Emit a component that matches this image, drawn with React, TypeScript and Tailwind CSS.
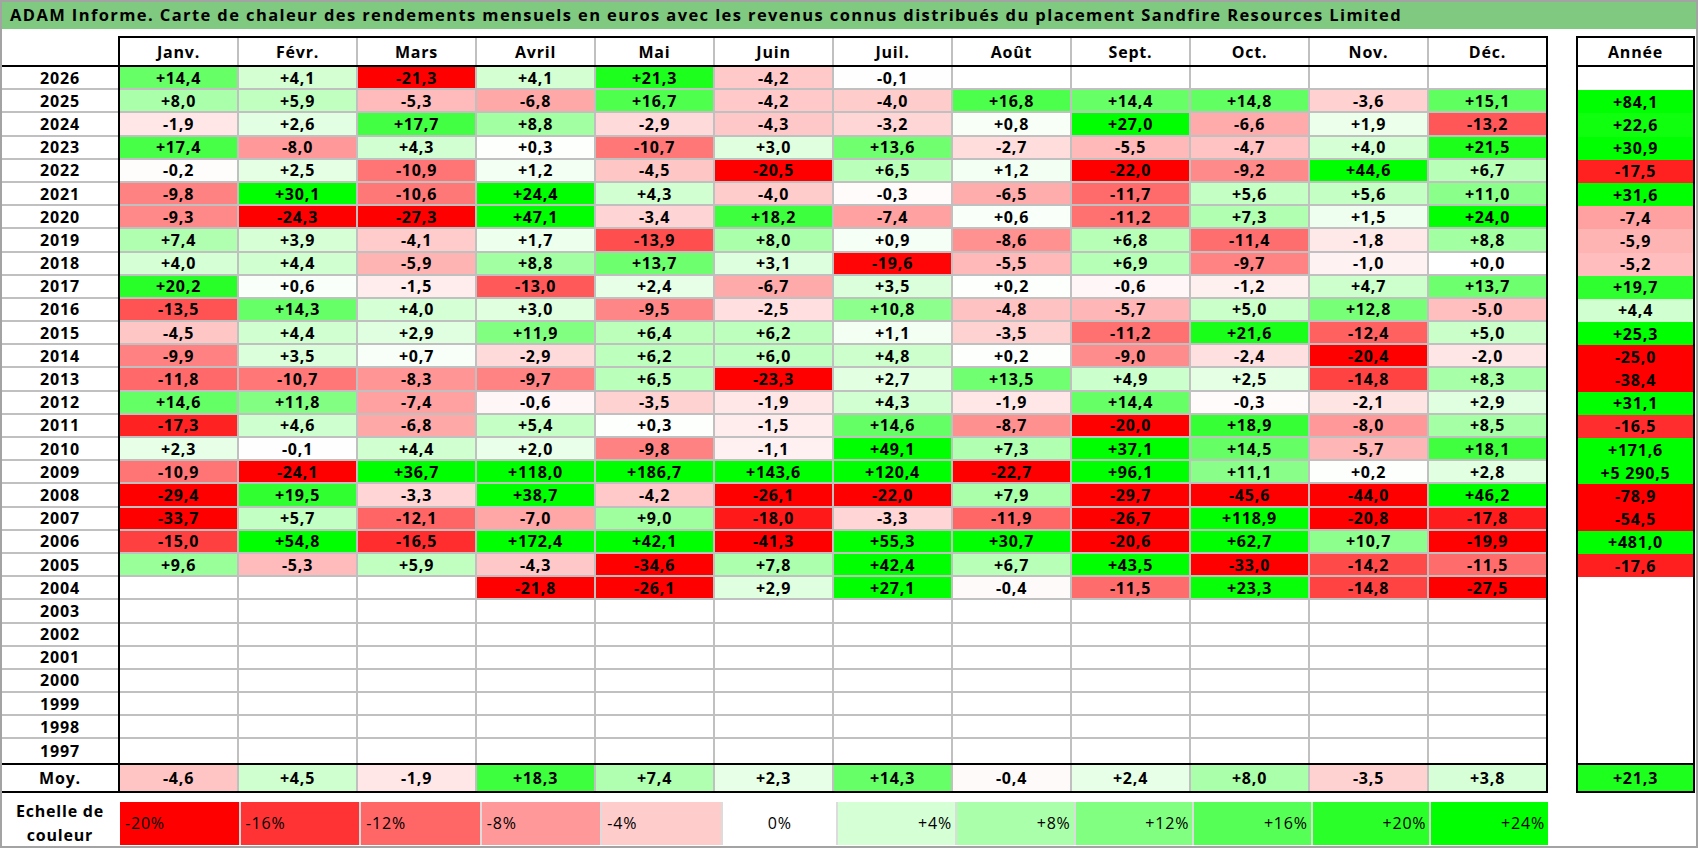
import React from 'react';

const months = ['Janv.', 'Févr.', 'Mars', 'Avril', 'Mai', 'Juin', 'Juil.', 'Août', 'Sept.', 'Oct.', 'Nov.', 'Déc.'];

// year, Jan..Dec, then yearly total ('' = no data)
const rows: [string, string[]][] = [
  ['2026', ['+14,4', '+4,1', '-21,3', '+4,1', '+21,3', '-4,2', '-0,1', '', '', '', '', '', '']],
  ['2025', ['+8,0', '+5,9', '-5,3', '-6,8', '+16,7', '-4,2', '-4,0', '+16,8', '+14,4', '+14,8', '-3,6', '+15,1', '+84,1']],
  ['2024', ['-1,9', '+2,6', '+17,7', '+8,8', '-2,9', '-4,3', '-3,2', '+0,8', '+27,0', '-6,6', '+1,9', '-13,2', '+22,6']],
  ['2023', ['+17,4', '-8,0', '+4,3', '+0,3', '-10,7', '+3,0', '+13,6', '-2,7', '-5,5', '-4,7', '+4,0', '+21,5', '+30,9']],
  ['2022', ['-0,2', '+2,5', '-10,9', '+1,2', '-4,5', '-20,5', '+6,5', '+1,2', '-22,0', '-9,2', '+44,6', '+6,7', '-17,5']],
  ['2021', ['-9,8', '+30,1', '-10,6', '+24,4', '+4,3', '-4,0', '-0,3', '-6,5', '-11,7', '+5,6', '+5,6', '+11,0', '+31,6']],
  ['2020', ['-9,3', '-24,3', '-27,3', '+47,1', '-3,4', '+18,2', '-7,4', '+0,6', '-11,2', '+7,3', '+1,5', '+24,0', '-7,4']],
  ['2019', ['+7,4', '+3,9', '-4,1', '+1,7', '-13,9', '+8,0', '+0,9', '-8,6', '+6,8', '-11,4', '-1,8', '+8,8', '-5,9']],
  ['2018', ['+4,0', '+4,4', '-5,9', '+8,8', '+13,7', '+3,1', '-19,6', '-5,5', '+6,9', '-9,7', '-1,0', '+0,0', '-5,2']],
  ['2017', ['+20,2', '+0,6', '-1,5', '-13,0', '+2,4', '-6,7', '+3,5', '+0,2', '-0,6', '-1,2', '+4,7', '+13,7', '+19,7']],
  ['2016', ['-13,5', '+14,3', '+4,0', '+3,0', '-9,5', '-2,5', '+10,8', '-4,8', '-5,7', '+5,0', '+12,8', '-5,0', '+4,4']],
  ['2015', ['-4,5', '+4,4', '+2,9', '+11,9', '+6,4', '+6,2', '+1,1', '-3,5', '-11,2', '+21,6', '-12,4', '+5,0', '+25,3']],
  ['2014', ['-9,9', '+3,5', '+0,7', '-2,9', '+6,2', '+6,0', '+4,8', '+0,2', '-9,0', '-2,4', '-20,4', '-2,0', '-25,0']],
  ['2013', ['-11,8', '-10,7', '-8,3', '-9,7', '+6,5', '-23,3', '+2,7', '+13,5', '+4,9', '+2,5', '-14,8', '+8,3', '-38,4']],
  ['2012', ['+14,6', '+11,8', '-7,4', '-0,6', '-3,5', '-1,9', '+4,3', '-1,9', '+14,4', '-0,3', '-2,1', '+2,9', '+31,1']],
  ['2011', ['-17,3', '+4,6', '-6,8', '+5,4', '+0,3', '-1,5', '+14,6', '-8,7', '-20,0', '+18,9', '-8,0', '+8,5', '-16,5']],
  ['2010', ['+2,3', '-0,1', '+4,4', '+2,0', '-9,8', '-1,1', '+49,1', '+7,3', '+37,1', '+14,5', '-5,7', '+18,1', '+171,6']],
  ['2009', ['-10,9', '-24,1', '+36,7', '+118,0', '+186,7', '+143,6', '+120,4', '-22,7', '+96,1', '+11,1', '+0,2', '+2,8', '+5 290,5']],
  ['2008', ['-29,4', '+19,5', '-3,3', '+38,7', '-4,2', '-26,1', '-22,0', '+7,9', '-29,7', '-45,6', '-44,0', '+46,2', '-78,9']],
  ['2007', ['-33,7', '+5,7', '-12,1', '-7,0', '+9,0', '-18,0', '-3,3', '-11,9', '-26,7', '+118,9', '-20,8', '-17,8', '-54,5']],
  ['2006', ['-15,0', '+54,8', '-16,5', '+172,4', '+42,1', '-41,3', '+55,3', '+30,7', '-20,6', '+62,7', '+10,7', '-19,9', '+481,0']],
  ['2005', ['+9,6', '-5,3', '+5,9', '-4,3', '-34,6', '+7,8', '+42,4', '+6,7', '+43,5', '-33,0', '-14,2', '-11,5', '-17,6']],
  ['2004', ['', '', '', '-21,8', '-26,1', '+2,9', '+27,1', '-0,4', '-11,5', '+23,3', '-14,8', '-27,5', '']],
  ['2003', Array(13).fill('')],
  ['2002', Array(13).fill('')],
  ['2001', Array(13).fill('')],
  ['2000', Array(13).fill('')],
  ['1999', Array(13).fill('')],
  ['1998', Array(13).fill('')],
  ['1997', Array(13).fill('')],
];

const averages = ['-4,6', '+4,5', '-1,9', '+18,3', '+7,4', '+2,3', '+14,3', '-0,4', '+2,4', '+8,0', '-3,5', '+3,8', '+21,3'];

const scale = ['-20%', '-16%', '-12%', '-8%', '-4%', '0%', '+4%', '+8%', '+12%', '+16%', '+20%', '+24%'];

// red below zero (full at -20), green above (full at +24)
function heat(v: number): string {
  if (v < 0) {
    const g = Math.round(255 * (1 - Math.min(1, -v / 20)));
    return `rgb(255,${g},${g})`;
  }
  const r = Math.round(255 * (1 - Math.min(1, v / 24)));
  return `rgb(${r},255,${r})`;
}

function bg(s: string) {
  if (!s) return undefined;
  return { backgroundColor: heat(parseFloat(s.replace(/\s/g, '').replace(',', '.'))) };
}

function MonthCells({ values }: { values: string[] }) {
  return (
    <>
      {values.slice(0, 12).map((v, i) => (
        <div
          key={i}
          style={bg(v)}
          className={`flex-1 basis-0 flex items-center justify-center ${i < 11 ? 'border-r-2 border-[#c0c0c0]' : ''}`}
        >
          {v}
        </div>
      ))}
    </>
  );
}

export default function App() {
  return (
    <div className="w-[1698px] h-[848px] border-2 border-[#a3a3a3] bg-white flex flex-col font-['Open_Sans',sans-serif] font-bold text-[16px] tracking-[0.8px] text-black overflow-hidden">
      <div className="h-[27px] shrink-0 bg-[#80c980] pl-[8px] flex items-center text-[16.5px] tracking-[1.4px]">
        ADAM Informe. Carte de chaleur des rendements mensuels en euros avec les revenus connus distribués du placement Sandfire Resources Limited
      </div>

      <div className="h-[7px] shrink-0" />

      <div className="flex shrink-0">
        {/* main grid */}
        <div className="w-[1546px] flex flex-col">
          <div className="flex h-[31px]">
            <div className="w-[116px] border-b-2 border-black" />
            <div className="flex-1 flex border-2 border-black">
              {months.map((m, i) => (
                <div
                  key={m}
                  className={`flex-1 basis-0 flex items-center justify-center ${i < 11 ? 'border-r-2 border-[#c0c0c0]' : ''}`}
                >
                  {m}
                </div>
              ))}
            </div>
          </div>

          <div className="flex">
            <div className="w-[116px] flex flex-col">
              {rows.map(([y], i) => (
                <div
                  key={y}
                  className={`h-[23.2px] flex items-center justify-center ${i < rows.length - 1 ? 'border-b-2 border-[#c0c0c0]' : ''}`}
                >
                  {y}
                </div>
              ))}
            </div>
            <div className="flex-1 flex flex-col border-x-2 border-black">
              {rows.map(([y, vals], i) => (
                <div
                  key={y}
                  className={`h-[23.2px] flex ${i < rows.length - 1 ? 'border-b-2 border-[#c0c0c0]' : ''}`}
                >
                  <MonthCells values={vals} />
                </div>
              ))}
            </div>
          </div>

          <div className="flex h-[30px] border-y-2 border-black">
            <div className="w-[116px] flex items-center justify-center">Moy.</div>
            <div className="flex-1 flex border-x-2 border-black">
              <MonthCells values={averages} />
            </div>
          </div>
        </div>

        <div className="w-[28px]" />

        {/* yearly column */}
        <div className="w-[119px] flex flex-col">
          <div className="h-[31px] border-2 border-black flex items-center justify-center">Année</div>
          <div className="flex flex-col border-x-2 border-black">
            {rows.map(([y, vals]) => (
              <div key={y} style={bg(vals[12])} className="h-[23.2px] flex items-center justify-center">
                {vals[12]}
              </div>
            ))}
          </div>
          <div style={bg(averages[12])} className="h-[30px] border-2 border-black flex items-center justify-center">
            {averages[12]}
          </div>
        </div>
      </div>

      <div className="h-[9px] shrink-0" />

      <div className="flex h-[43px] shrink-0">
        <div className="w-[116px] flex flex-col items-center justify-center leading-[24px]">
          <span>Echelle de</span>
          <span>couleur</span>
        </div>
        <div className="w-[1430px] flex pl-[2px] font-normal">
          {scale.map((s, i) => {
            const v = parseFloat(s);
            const align = v < 0 ? 'justify-start pl-[5px]' : v > 0 ? 'justify-end pr-[3px]' : 'justify-center';
            return (
              <div
                key={s}
                style={{ backgroundColor: heat(v) }}
                className={`flex-1 basis-0 flex items-center ${align} ${i < 11 ? 'border-r-2 border-[#dcdcdc]' : ''}`}
              >
                {s}
              </div>
            );
          })}
        </div>
      </div>
    </div>
  );
}
